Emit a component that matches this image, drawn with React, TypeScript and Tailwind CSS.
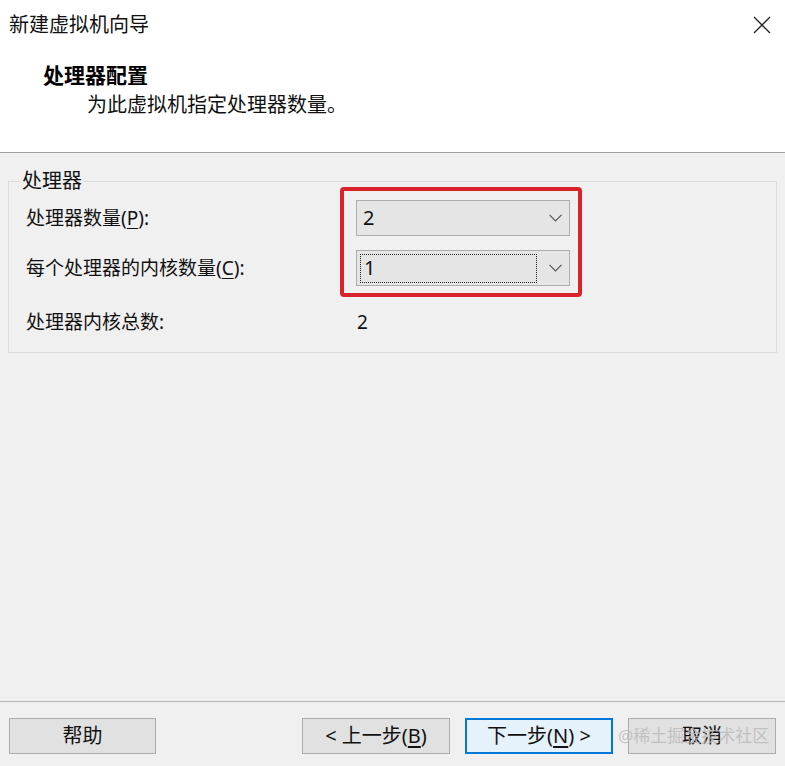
const font = "font-['Noto_Sans','Noto_Sans_CJK_SC',sans-serif]";

function Chevron() {
  return (
    <svg width="13" height="8" viewBox="0 0 13 8" className="text-[#555]">
      <path d="M0.5 0.8 L6.5 6.8 L12.5 0.8" fill="none" stroke="currentColor" strokeWidth="1.2" />
    </svg>
  );
}

function Combo({ value, focused }: { value: string; focused?: boolean }) {
  return (
    <div className="flex h-[36px] w-[214px] items-center border border-[#adadad] bg-[#e5e5e5] pl-[3px] pr-[7px]">
      <div
        className={`flex h-[29px] flex-1 items-center pl-[3px] ${
          focused ? "border border-dotted border-[#222]" : ""
        }`}
      >
        <span className="text-[20px] leading-none text-[#111]">{value}</span>
      </div>
      <div className="ml-[12px]">
        <Chevron />
      </div>
    </div>
  );
}

function Button({
  children,
  primary,
}: {
  children: React.ReactNode;
  primary?: boolean;
}) {
  return (
    <button
      className={`flex h-[36px] w-[148px] items-center justify-center text-[20px] leading-none text-[#111] ${
        primary
          ? "border-2 border-[#0078d7] bg-[#e5f1fb]"
          : "border border-[#adadad] bg-[#e1e1e1]"
      }`}
    >
      {children}
    </button>
  );
}

export default function App() {
  return (
    <div className={`flex h-[766px] w-[785px] flex-col bg-[#f0f0f0] ${font}`}>
      {/* header */}
      <header className="flex h-[153px] flex-col border-b border-[#a0a0a0] bg-white">
        <div className="flex items-center justify-between pl-[9px] pr-[14px] pt-[11px]">
          <h1 className="text-[20px] leading-[28px] text-[#111]">新建虚拟机向导</h1>
          <svg width="18" height="18" viewBox="0 0 18 18" className="text-[#222]">
            <path d="M1 1 L17 17 M17 1 L1 17" stroke="currentColor" strokeWidth="1.3" />
          </svg>
        </div>
        <div className="pl-[43px] pt-[23px]">
          <h2 className="text-[21px] font-bold leading-[26px] text-black">处理器配置</h2>
          <p className="pl-[44px] pt-[4px] text-[20px] leading-[26px] text-[#111]">
            为此虚拟机指定处理器数量。
          </p>
        </div>
      </header>

      {/* body */}
      <main className="relative flex-1 px-[8px] pt-[16px]">
        <fieldset className="h-[184px] border border-[#dcdcdc]">
          <legend className="ml-[12px] px-[1px] text-[20px] leading-[24px] text-[#111]">处理器</legend>
          <div className="grid grid-cols-[330px_1fr] items-center gap-y-[14px] px-[17px] pt-[7px] text-[19px] leading-none text-[#111]">
            <span>
              处理器数量(<span className="underline underline-offset-[3px]">P</span>):
            </span>
            <Combo value="2" />
            <span>
              每个处理器的内核数量(<span className="underline underline-offset-[3px]">C</span>):
            </span>
            <Combo value="1" focused />
            <span className="pt-[13px]">处理器内核总数:</span>
            <span className="pl-[1px] pt-[13px] text-[19px]">2</span>
          </div>
        </fieldset>
        <div className="pointer-events-none absolute left-[340px] top-[34px] h-[110px] w-[242px] rounded-[4px] border-[4px] border-[#d9222a]" />
      </main>

      {/* footer */}
      <footer className="flex h-[65px] items-start border-t border-[#b4b4b4] px-[9px] pt-[16px]">
        <Button>帮助</Button>
        <div className="ml-[146px] flex gap-[15px]">
          <Button>
            &lt; 上一步(<span className="underline underline-offset-[3px]">B</span>)
          </Button>
          <Button primary>
            下一步(<span className="underline underline-offset-[3px]">N</span>) &gt;
          </Button>
          <div className="relative">
            <Button>取消</Button>
            <span className="pointer-events-none absolute left-[-10px] top-[8px] whitespace-nowrap text-[17px] leading-[20px] text-[#b8b8b8]/80">
              @稀土掘金技术社区
            </span>
          </div>
        </div>
      </footer>
    </div>
  );
}
